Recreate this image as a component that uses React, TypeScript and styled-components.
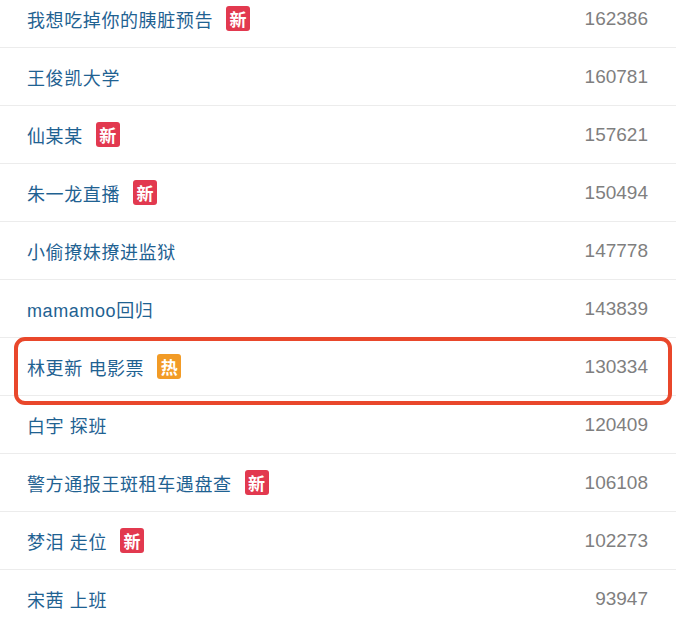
import React from "react";
import styled, { createGlobalStyle } from "styled-components";

const GlobalStyle = createGlobalStyle`
  html, body {
    margin: 0;
    padding: 0;
    background: #fff;
    overflow: hidden;
  }
  body {
    font-family: "Liberation Sans", "Noto Sans CJK SC", sans-serif;
  }
`;

const List = styled.ul`
  margin: -10px 0 0;
  padding: 0;
  list-style: none;
  width: 676px;
`;

const Row = styled.li`
  position: relative;
  display: flex;
  align-items: center;
  height: 57px;
  padding: 0 28px 0 27px;
  border-bottom: 1px solid #ececec;
`;

const Title = styled.span`
  display: flex;
  align-items: center;
  gap: 13px;
  flex: 1;
  color: #1f6292;
  font-size: 18px;
  letter-spacing: 0.6px;
`;

const Badge = styled.span<{ $kind: "new" | "hot" }>`
  display: inline-flex;
  align-items: center;
  justify-content: center;
  width: 24px;
  height: 25px;
  border-radius: 3px;
  background: ${(p) => (p.$kind === "new" ? "#e2394f" : "#f29b26")};
  color: #fff;
  font-size: 17px;
  font-weight: 700;
  letter-spacing: 0;
  font-family: "Noto Sans CJK SC", sans-serif;
  line-height: 1;
`;

const Count = styled.span`
  color: #7f7f7f;
  font-size: 19px;
`;

const Highlight = styled.div`
  position: absolute;
  left: 14px;
  right: 4px;
  top: -1px;
  height: 60px;
  border: 4px solid #e9472b;
  border-radius: 11px;
  pointer-events: none;
`;

type Item = {
  title: string;
  count: number;
  badge?: "new" | "hot";
  marked?: boolean;
};

const items: Item[] = [
  { title: "我想吃掉你的胰脏预告", count: 162386, badge: "new" },
  { title: "王俊凯大学", count: 160781 },
  { title: "仙某某", count: 157621, badge: "new" },
  { title: "朱一龙直播", count: 150494, badge: "new" },
  { title: "小偷撩妹撩进监狱", count: 147778 },
  { title: "mamamoo回归", count: 143839 },
  { title: "林更新 电影票", count: 130334, badge: "hot", marked: true },
  { title: "白宇 探班", count: 120409 },
  { title: "警方通报王斑租车遇盘查", count: 106108, badge: "new" },
  { title: "梦泪 走位", count: 102273, badge: "new" },
  { title: "宋茜 上班", count: 93947 },
];

const App: React.FC = () => {
  return (
    <>
      <GlobalStyle />
      <List>
        {items.map((item) => (
          <Row key={item.title}>
            <Title>
              {item.title}
              {item.badge && (
                <Badge $kind={item.badge}>
                  {item.badge === "new" ? "新" : "热"}
                </Badge>
              )}
            </Title>
            <Count>{item.count}</Count>
            {item.marked && <Highlight />}
          </Row>
        ))}
      </List>
    </>
  );
};

export default App;
